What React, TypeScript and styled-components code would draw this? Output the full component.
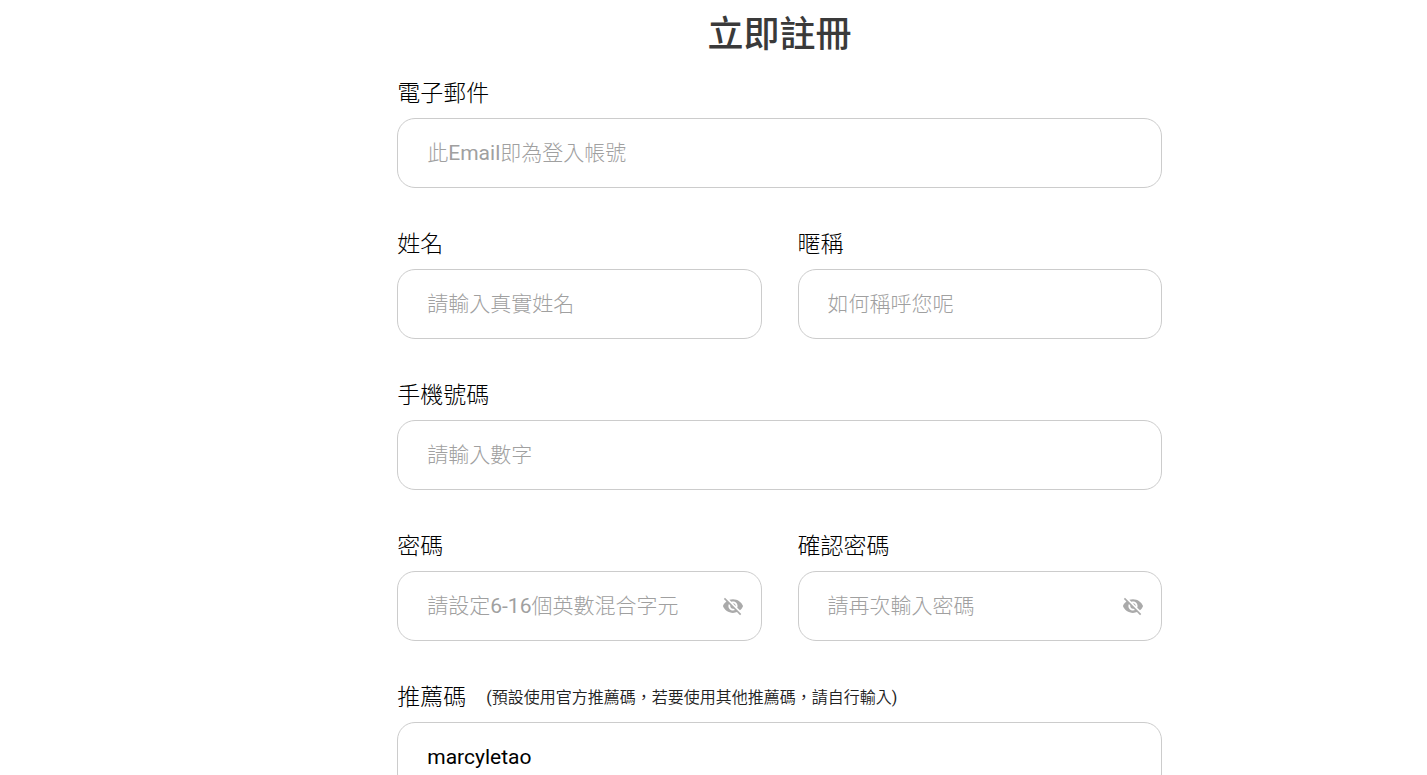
import React, { useId, useState } from 'react';
import styled, { createGlobalStyle } from 'styled-components';
import { MdVisibility, MdVisibilityOff } from 'react-icons/md';

const GlobalStyle = createGlobalStyle`
  * { box-sizing: border-box; }
  body {
    margin: 0;
    background: #fff;
    color: #000;
    font-family: Roboto, "Noto Sans CJK TC Light", "Noto Sans CJK TC", sans-serif;
    font-weight: 400;
  }
`;

const Page = styled.main`
  padding: 9px 18.58% 40px 27.84%;
`;

const Title = styled.h1`
  margin: 0 0 19px;
  color: #3a3a3a;
  font-family: Roboto, "Noto Sans CJK TC", sans-serif;
  font-size: 36px;
  font-weight: 500;
  line-height: 52px;
  text-align: center;
`;

const Form = styled.form`
  display: flex;
  flex-direction: column;
  gap: 43px;
`;

const Row = styled.div`
  display: grid;
  grid-template-columns: repeat(2, minmax(0, 1fr));
  gap: 36px;
`;

const FieldBox = styled.div`
  display: flex;
  flex-direction: column;
  gap: 10px;
`;

const LabelLine = styled.div`
  display: flex;
  align-items: center;
  gap: 20px;
  line-height: 28px;
`;

const Label = styled.label`
  font-size: 23px;
`;

const Note = styled.span`
  color: #222;
  font-family: Roboto, "Noto Sans CJK TC DemiLight", "Noto Sans CJK TC", sans-serif;
  font-size: 16px;
`;

const Control = styled.div`
  position: relative;
`;

const Input = styled.input<{ $withToggle: boolean }>`
  display: block;
  width: 100%;
  height: 70px;
  padding: 0 ${(p) => (p.$withToggle ? 48 : 29)}px 0 29px;
  border: 1px solid #ccc;
  border-radius: 18px;
  outline: none;
  background: #fff;
  color: #000;
  font-family: inherit;
  font-size: 21px;
  font-weight: 400;

  &::placeholder {
    color: #a0a0a0;
    opacity: 1;
  }

  &:focus {
    border-color: #888;
  }
`;

const Toggle = styled.button`
  position: absolute;
  top: 0;
  bottom: 0;
  right: 18px;
  display: flex;
  align-items: center;
  padding: 0;
  border: 0;
  background: none;
  color: #aaa;
  font-size: 22px;
  cursor: pointer;
`;

type FieldProps = {
  label: string;
  type?: string;
  placeholder?: string;
  value?: string;
  note?: string;
};

function Field({ label, type = 'text', placeholder, value, note }: FieldProps) {
  const id = useId();
  const [shown, setShown] = useState(false);
  const secret = type === 'password';
  return (
    <FieldBox>
      <LabelLine>
        <Label htmlFor={id}>{label}</Label>
        {note && <Note>{note}</Note>}
      </LabelLine>
      <Control>
        <Input
          id={id}
          type={secret && shown ? 'text' : type}
          placeholder={placeholder}
          defaultValue={value}
          $withToggle={secret}
        />
        {secret && (
          <Toggle type="button" aria-label={shown ? '隱藏密碼' : '顯示密碼'} onClick={() => setShown(!shown)}>
            {shown ? <MdVisibility /> : <MdVisibilityOff />}
          </Toggle>
        )}
      </Control>
    </FieldBox>
  );
}

export default function App() {
  return (
    <>
      <GlobalStyle />
      <Page>
        <Title>立即註冊</Title>
        <Form>
          <Field label="電子郵件" type="email" placeholder="此Email即為登入帳號" />
          <Row>
            <Field label="姓名" placeholder="請輸入真實姓名" />
            <Field label="暱稱" placeholder="如何稱呼您呢" />
          </Row>
          <Field label="手機號碼" type="tel" placeholder="請輸入數字" />
          <Row>
            <Field label="密碼" type="password" placeholder="請設定6-16個英數混合字元" />
            <Field label="確認密碼" type="password" placeholder="請再次輸入密碼" />
          </Row>
          <Field label="推薦碼" value="marcyletao" note="(預設使用官方推薦碼，若要使用其他推薦碼，請自行輸入)" />
        </Form>
      </Page>
    </>
  );
}
